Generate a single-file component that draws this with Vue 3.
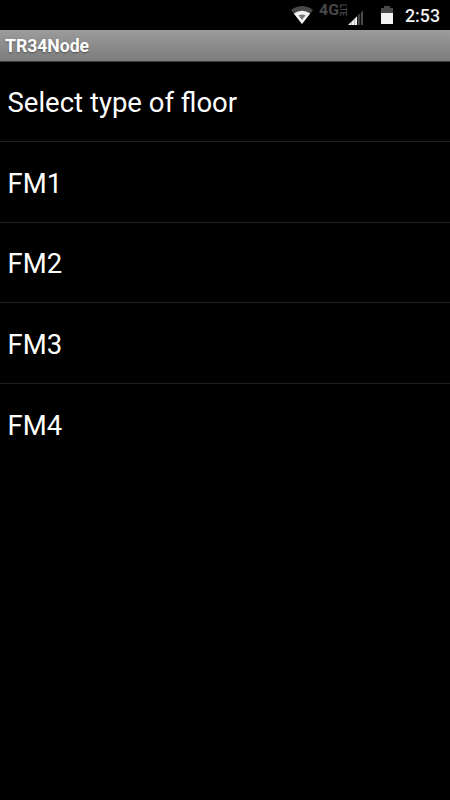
<template>
  <div class="screen">
    <header class="status-bar">
      <svg class="wifi" viewBox="0 0 22 18" width="22" height="18">
        <path d="M0 4Q11 -4 22 4L11 18Z" fill="#484848" />
        <path d="M2.8 7.4Q11 2 19.2 7.4L11 18Z" fill="#f2f2f2" />
        <path d="M7.4 9.2Q11 7.8 14.6 9.2L11 14Z" fill="#777" />
      </svg>
      <svg class="network" viewBox="0 0 29 20" width="29" height="20">
        <text x="0" y="15.4" class="network-main" textLength="20" lengthAdjust="spacingAndGlyphs">4G</text>
        <text transform="translate(21 4) rotate(90)" class="network-sub" textLength="12" lengthAdjust="spacingAndGlyphs">LTE</text>
      </svg>
      <svg class="signal" viewBox="0 0 16 16" width="16" height="16">
        <path d="M0 15L3 12V15Z M3.2 11.9L6 9.2V15H3.2Z M6.2 8.9L9 6.2V15H6.2Z" fill="#eee" />
        <path d="M9.6 5.6L11.8 3.5V15H9.6Z M12.8 2.5L15 0.3V15H12.8Z" fill="#484848" />
      </svg>
      <svg class="battery" viewBox="0 0 12 18" width="12" height="18">
        <path d="M0 2H3V0H9V2H12V7H0Z" fill="#484848" />
        <path d="M0 7H12V18H0Z" fill="#f2f2f2" />
      </svg>
      <span class="clock">2:53</span>
    </header>
    <div class="title-bar">TR34Node</div>
    <ul class="floor-list">
      <li v-for="item in items" :key="item" class="floor-item" @click="selected = item">{{ item }}</li>
    </ul>
  </div>
</template>

<script setup>
  import { ref } from 'vue'

  const items = ['Select type of floor', 'FM1', 'FM2', 'FM3', 'FM4']
  const selected = ref(items[0])
</script>

<style>
  body {
    margin: 0;
    background-color: #000000;
  }
</style>

<style scoped>
  .screen {
    width: 100%;
    height: 100vh;
    overflow: hidden;
    background-color: #000000;
    color: #ffffff;
    font-family: Roboto, "Liberation Sans", sans-serif;
  }

  .status-bar {
    display: flex;
    align-items: flex-start;
    justify-content: flex-end;
    box-sizing: border-box;
    height: 30px;
    padding-right: 10px;
  }
  .status-bar svg {
    flex: none;
    overflow: visible;
  }
  .wifi {
    margin-top: 6px;
    margin-right: 6px;
  }
  .network-main {
    font-size: 15.5px;
    font-weight: 700;
    fill: #484848;
  }
  .network-sub {
    font-size: 8.5px;
    font-weight: 700;
    fill: #484848;
  }
  .signal {
    margin-top: 10px;
    margin-right: 17px;
  }
  .battery {
    margin-top: 6px;
  }
  .clock {
    width: 47px;
    font-size: 17.8px;
    font-weight: 500;
    line-height: 32px;
    text-align: right;
    color: #f2f2f2;
  }

  .title-bar {
    box-sizing: border-box;
    height: 32px;
    padding-left: 5px;
    border-bottom: 1px solid #3c3c3c;
    background: linear-gradient(#9c9c9c, #7c7c7c);
    font-size: 17.6px;
    font-weight: 700;
    line-height: 32px;
    text-shadow: 0 1px 2px rgba(0, 0, 0, 0.4);
  }

  .floor-list {
    margin: -0.5px 0 0;
    padding: 0;
    list-style: none;
  }
  .floor-item {
    box-sizing: border-box;
    height: 80.65px;
    padding-top: 0.5px;
    padding-left: 7.5px;
    border-bottom: 1px solid #202020;
    font-size: 27.5px;
    line-height: 82px;
  }
  .floor-item:last-child {
    border-bottom: none;
  }
</style>
